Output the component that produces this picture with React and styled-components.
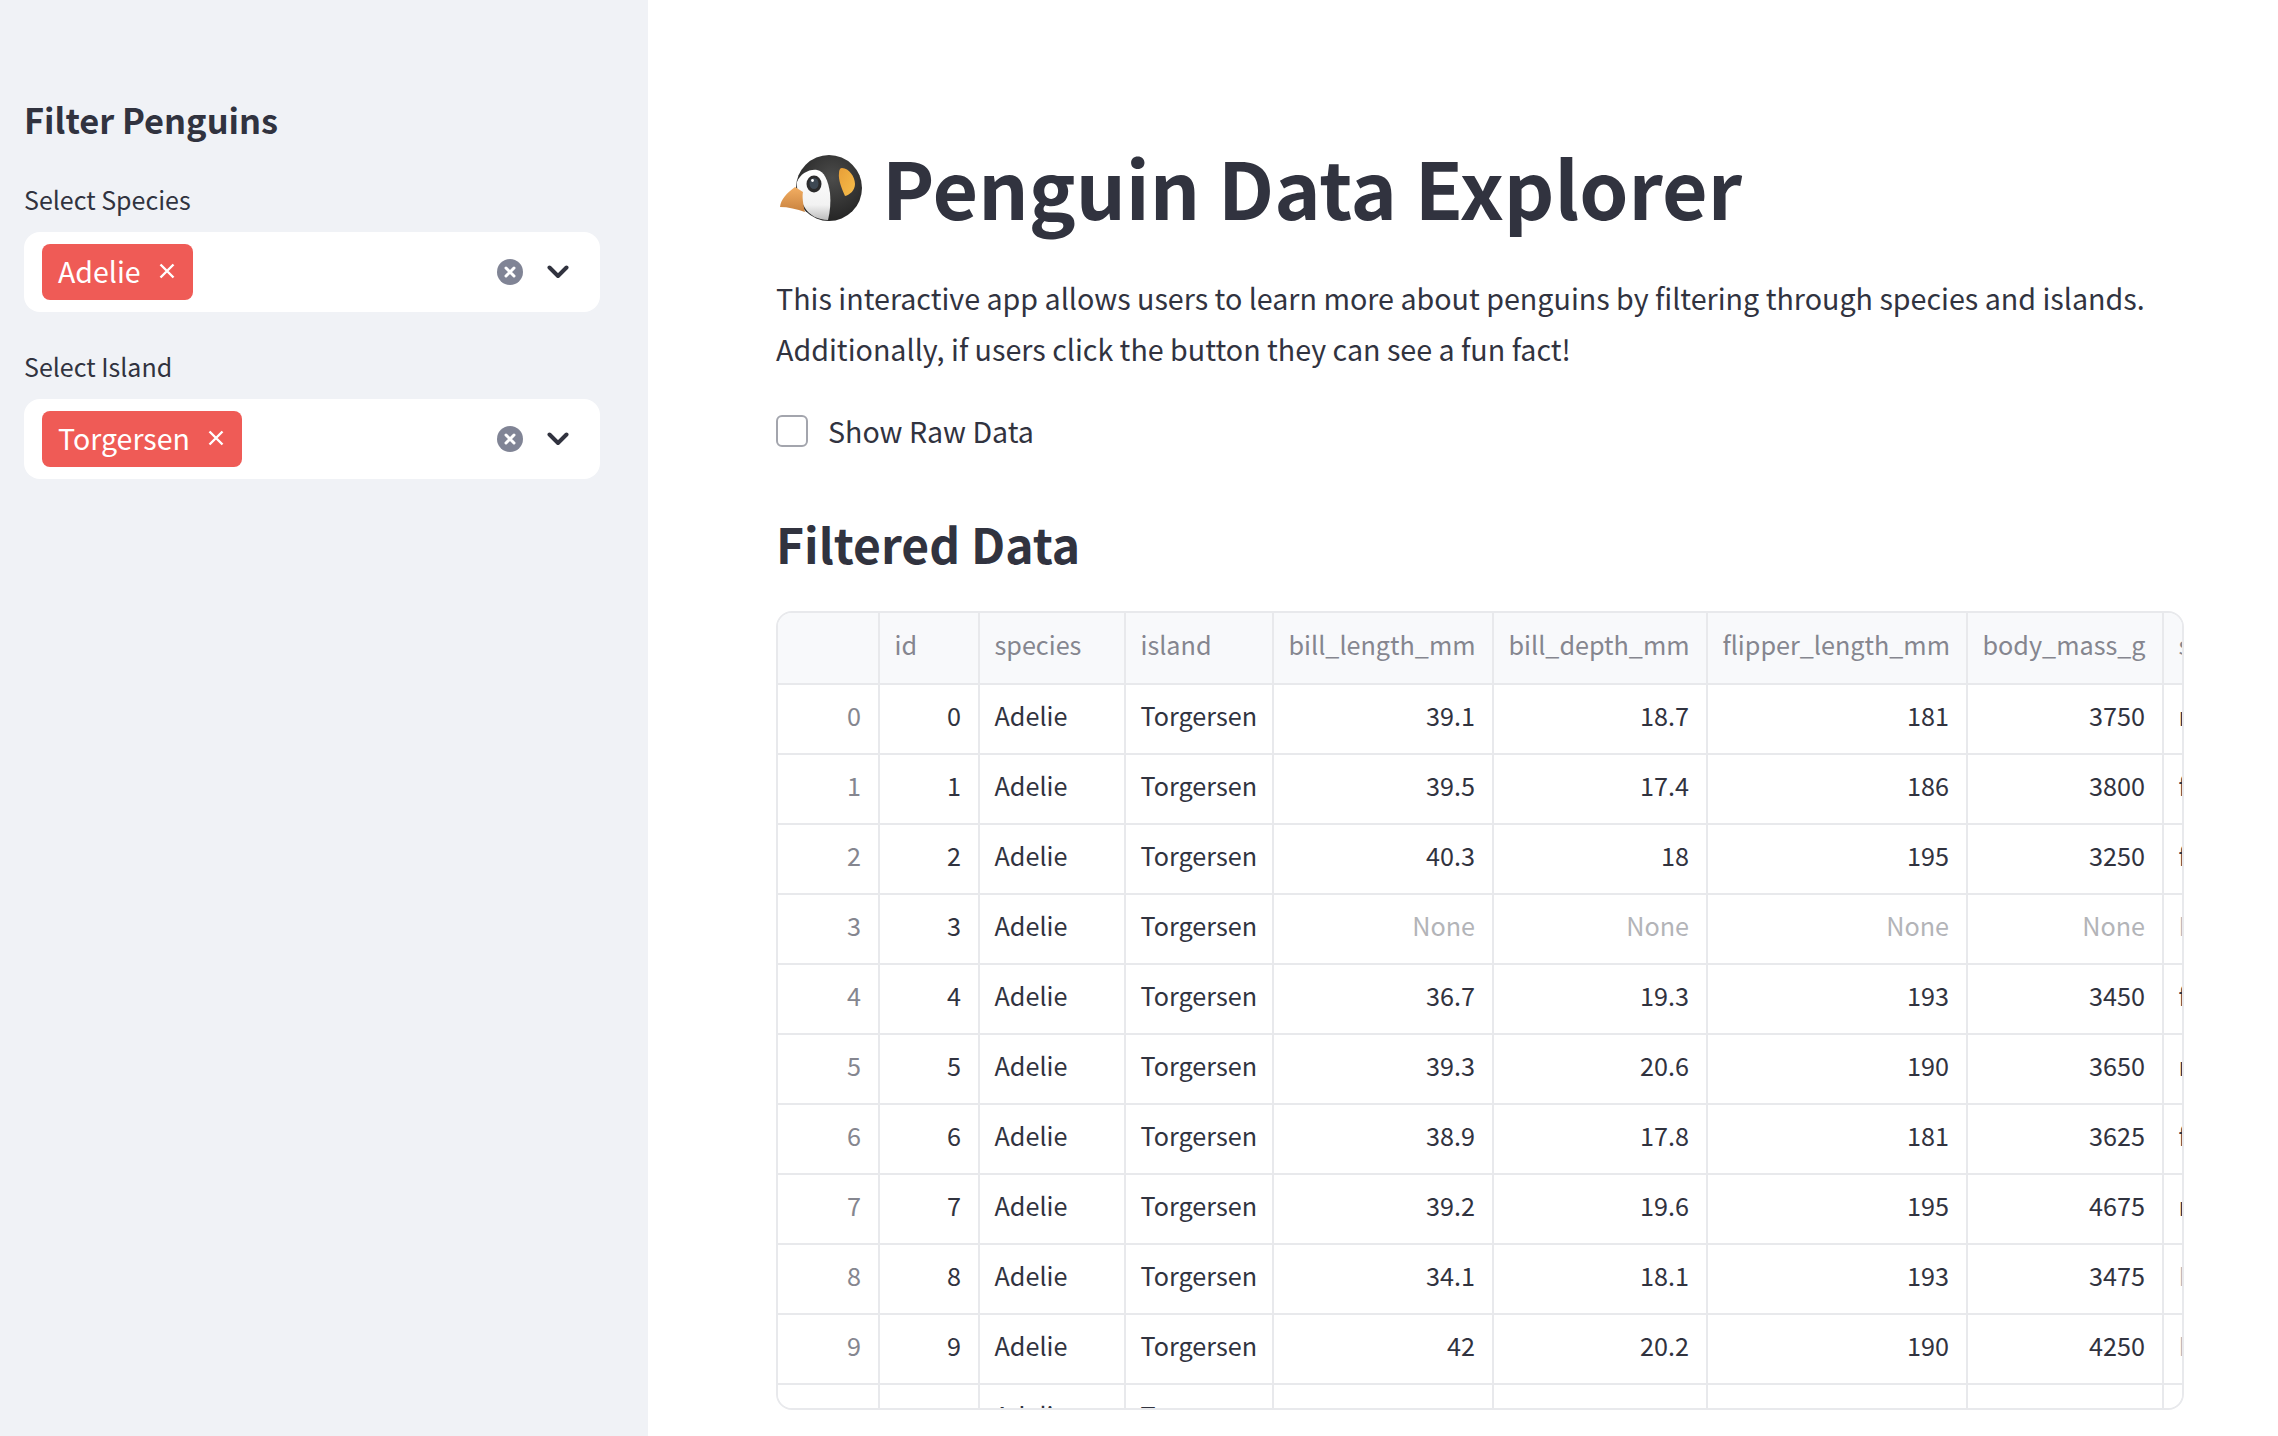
import React from "react";
import styled, { createGlobalStyle } from "styled-components";

const Global = createGlobalStyle`
  html, body { margin: 0; padding: 0; background: #fff; }
  body { font-family: "Noto Sans CJK SC", "Noto Sans", sans-serif; color: #31333f; }
`;

const Page = styled.div`
  display: flex;
  width: 2278px;
  height: 1436px;
  overflow: hidden;
`;

const Sidebar = styled.aside`
  width: 648px;
  flex: none;
  box-sizing: border-box;
  background: #f0f2f6;
  padding: 93px 48px 0 24px;
`;

const SideTitle = styled.h2`
  margin: 0 0 34px;
  font-size: 34.4px;
  line-height: 52px;
  font-weight: 700;
`;

const Field = styled.div`
  margin-bottom: 34px;
`;

const Label = styled.label`
  display: block;
  font-size: 25px;
  line-height: 40px;
  height: 40px;
  margin-bottom: 13px;
  font-weight: 400;
`;

const SelectBox = styled.div`
  height: 80px;
  box-sizing: border-box;
  background: #fff;
  border-radius: 16px;
  padding: 12px 31px 12px 18px;
  display: flex;
  align-items: center;
`;

const Tag = styled.span`
  height: 56px;
  box-sizing: border-box;
  background: #ef5b56;
  color: #fff;
  border-radius: 8px;
  padding: 0 18px 2px 16px;
  display: flex;
  align-items: center;
  gap: 18px;
  font-size: 28.5px;
  line-height: 1;
`;

const Spacer = styled.div`
  flex: 1;
`;

const Controls = styled.div`
  display: flex;
  align-items: center;
  gap: 24px;
`;

const Main = styled.main`
  flex: 1;
  min-width: 0;
  box-sizing: border-box;
  padding: 134px 94px 0 128px;
`;

const Title = styled.h1`
  margin: 0 0 34px;
  display: flex;
  align-items: center;
  gap: 18px;
  font-size: 78.7px;
  line-height: 104px;
  font-weight: 700;
  height: 104px;
`;

const Paragraph = styled.p`
  margin: 0 0 36px;
  font-size: 28.66px;
  line-height: 51px;
  width: 1404px;
`;

const CheckRow = styled.label`
  display: flex;
  align-items: center;
  gap: 20px;
  height: 40px;
  font-size: 28.6px;
  margin-bottom: 57px;
`;

const CheckBox = styled.span`
  width: 32px;
  height: 32px;
  margin-top: 2px;
  box-sizing: border-box;
  border: 2px solid #a3a5ad;
  border-radius: 6px;
  background: #fff;
`;

const Heading = styled.h2`
  margin: 0 0 32px;
  font-size: 48px;
  line-height: 72px;
  font-weight: 700;
`;

const TableFrame = styled.div`
  width: 1408px;
  height: 799px;
  box-sizing: border-box;
  border: 2px solid #e8e9ec;
  border-radius: 16px;
  overflow: hidden;
`;

const columns = "102px 100px 146px 148px 220px 214px 260px 196px 160px";

const Row = styled.div`
  display: grid;
  grid-template-columns: ${columns};
  height: ${(p) => (p.$head ? "72px" : "70px")};
  box-sizing: border-box;
  width: max-content;
  background: ${(p) => (p.$head ? "#f8f9fb" : "#fff")};
`;

const Cell = styled.div`
  box-sizing: border-box;
  border-right: 2px solid #e8e9ec;
  border-bottom: 2px solid #e8e9ec;
  padding: 0 17px 8px 14.5px;
  display: flex;
  align-items: center;
  justify-content: ${(p) => (p.$right ? "flex-end" : "flex-start")};
  font-size: 25.2px;
  white-space: nowrap;
  overflow: hidden;
  color: ${(p) => p.$color || "#31333f"};
`;

const PenguinSvg = styled.svg`
  flex: none;
  margin-top: 8px;
`;

const Clear = () => (
  <svg width="26" height="26" viewBox="0 0 26 26">
    <circle cx="13" cy="13" r="13" fill="#808495" />
    <path d="M9 9l8 8M17 9l-8 8" stroke="#fff" strokeWidth="3" strokeLinecap="round" />
  </svg>
);

const Chevron = () => (
  <svg width="22" height="14" viewBox="0 0 22 14">
    <path d="M2.5 2.5l8.5 8.5 8.5-8.5" fill="none" stroke="#31333f" strokeWidth="4" strokeLinecap="round" strokeLinejoin="round" />
  </svg>
);

const Cross = () => (
  <svg width="16" height="16" viewBox="0 0 16 16">
    <path d="M1.5 1.5l13 13M14.5 1.5l-13 13" stroke="#fff" strokeWidth="2.4" />
  </svg>
);

const Penguin = () => (
  <PenguinSvg width="88" height="70" viewBox="0 0 88 70">
    <defs>
      <radialGradient id="body" cx="55%" cy="35%" r="70%">
        <stop offset="0" stopColor="#4c4c4b" />
        <stop offset="1" stopColor="#222222" />
      </radialGradient>
      <linearGradient id="beak" x1="0" y1="0" x2="0" y2="1">
        <stop offset="0" stopColor="#f3ae62" />
        <stop offset="1" stopColor="#c8823f" />
      </linearGradient>
      <linearGradient id="face" x1="0" y1="0" x2="0" y2="1">
        <stop offset="0" stopColor="#ffffff" />
        <stop offset="0.7" stopColor="#f2f2f2" />
        <stop offset="1" stopColor="#bdbdbd" />
      </linearGradient>
      <linearGradient id="wing" x1="0" y1="0" x2="1" y2="1">
        <stop offset="0" stopColor="#e89f38" />
        <stop offset="1" stopColor="#f6bd4a" />
      </linearGradient>
    </defs>
    <circle cx="53" cy="33" r="33" fill="url(#body)" />
    <path d="M21 27 C24 19 33 14 41 15 C48 16 52 25 54 38 C55 47 54 57 52 65 C42 65 33 60 29 53 C25 46 20 36 21 27Z" fill="url(#face)" />
    <path d="M19 32 C11 38 5 44 4 52 C12 52 21 54 29 57 C27 49 26 41 27 37Z" fill="url(#beak)" />
    <ellipse cx="38" cy="29" rx="7.5" ry="8.5" fill="#2b2b2c" />
    <ellipse cx="38" cy="28.5" rx="4.5" ry="5.6" fill="#3d4853" />
    <circle cx="36.5" cy="25.5" r="1.4" fill="#fff" />
    <path d="M66 13 C73 13 79 22 79 29 C79 35 74 40 69 41 C66 34 62 25 63 18 C63 15 64 13 66 13Z" fill="url(#wing)" />
  </PenguinSvg>
);

const rows = [
  ["39.1", "18.7", "181", "3750", "male"],
  ["39.5", "17.4", "186", "3800", "female"],
  ["40.3", "18", "195", "3250", "female"],
  ["None", "None", "None", "None", "None"],
  ["36.7", "19.3", "193", "3450", "female"],
  ["39.3", "20.6", "190", "3650", "male"],
  ["38.9", "17.8", "181", "3625", "female"],
  ["39.2", "19.6", "195", "4675", "male"],
  ["34.1", "18.1", "193", "3475", "None"],
  ["42", "20.2", "190", "4250", "None"],
  ["37.8", "17.1", "186", "3300", "None"],
];

const heads = ["", "id", "species", "island", "bill_length_mm", "bill_depth_mm", "flipper_length_mm", "body_mass_g", "sex"];
const muted = "#85868f";
const none = "#b3b4b8";
const shade = (v) => (v === "None" ? none : undefined);

const Select = ({ label, value }) => (
  <Field>
    <Label>{label}</Label>
    <SelectBox>
      <Tag>
        {value}
        <Cross />
      </Tag>
      <Spacer />
      <Controls>
        <Clear />
        <Chevron />
      </Controls>
    </SelectBox>
  </Field>
);

export default function App() {
  return (
    <Page>
      <Global />
      <Sidebar>
        <SideTitle>Filter Penguins</SideTitle>
        <Select label="Select Species" value="Adelie" />
        <Select label="Select Island" value="Torgersen" />
      </Sidebar>
      <Main>
        <Title>
          <Penguin />
          Penguin Data Explorer
        </Title>
        <Paragraph>
          This interactive app allows users to learn more about penguins by filtering through species and islands.
          Additionally, if users click the button they can see a fun fact!
        </Paragraph>
        <CheckRow>
          <CheckBox />
          Show Raw Data
        </CheckRow>
        <Heading>Filtered Data</Heading>
        <TableFrame>
          <Row $head>
            {heads.map((h) => (
              <Cell key={h || "index"} $color={muted}>{h}</Cell>
            ))}
          </Row>
          {rows.map((r, i) => (
            <Row key={i}>
              <Cell $right $color={muted}>{i}</Cell>
              <Cell $right>{i}</Cell>
              <Cell>Adelie</Cell>
              <Cell>Torgersen</Cell>
              {r.slice(0, 4).map((v, j) => (
                <Cell key={j} $right $color={shade(v)}>{v}</Cell>
              ))}
              <Cell $color={shade(r[4])}>{r[4]}</Cell>
            </Row>
          ))}
        </TableFrame>
      </Main>
    </Page>
  );
}
